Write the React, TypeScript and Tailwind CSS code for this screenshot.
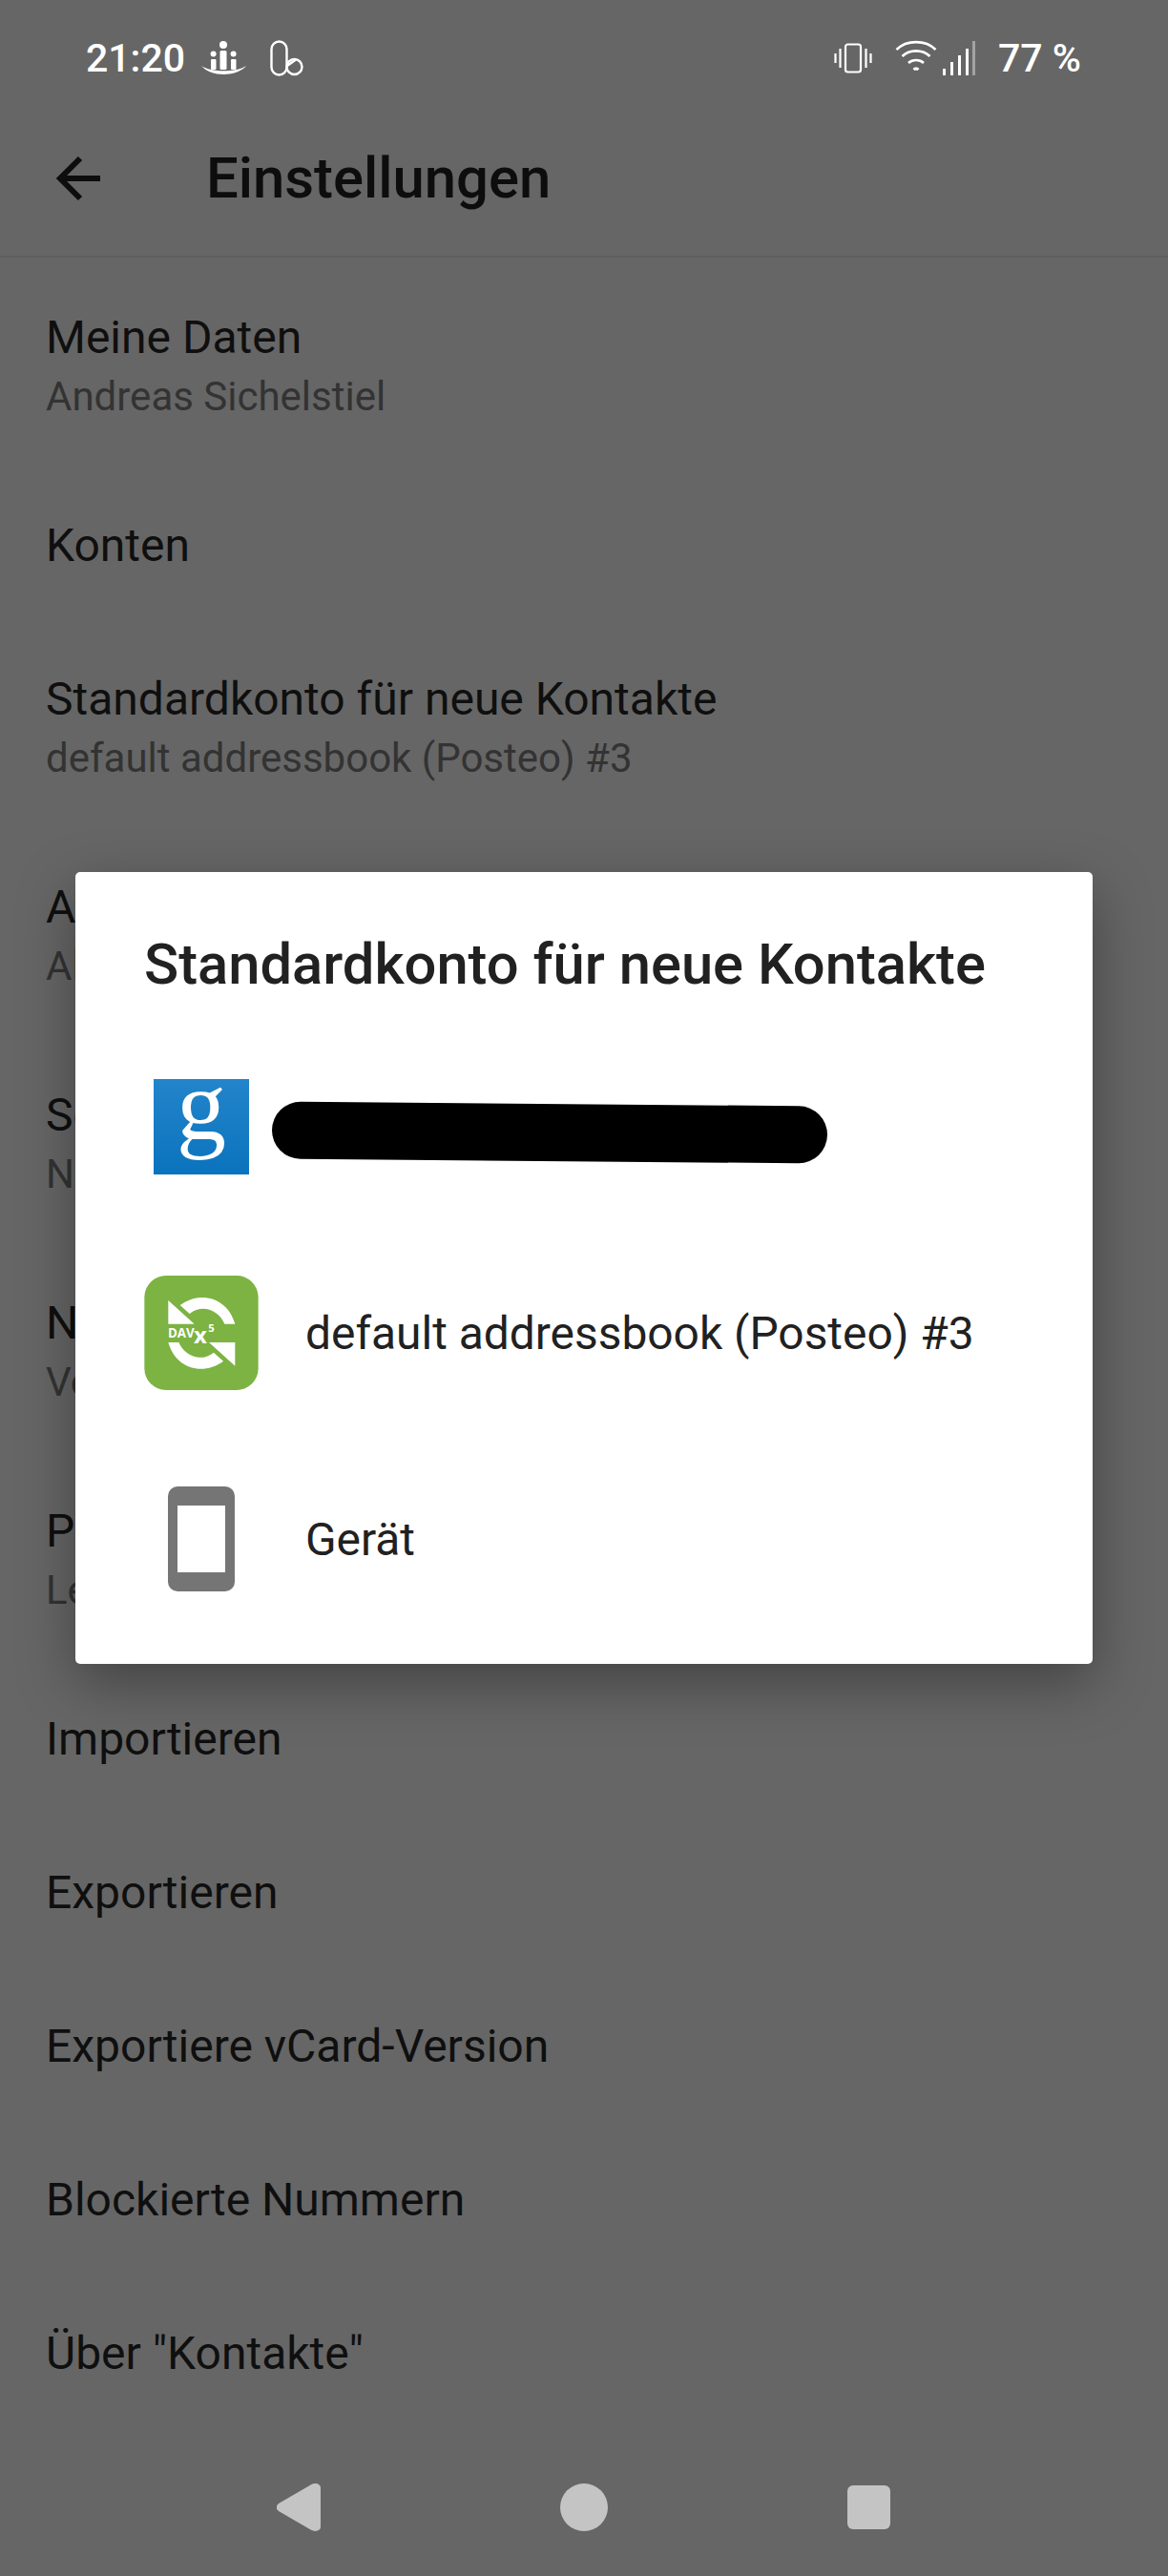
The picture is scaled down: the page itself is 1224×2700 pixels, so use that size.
import React from "react";
import { ArrowLeft } from "lucide-react";

const font = { fontFamily: "Roboto, sans-serif" };

type Row = { title: string; sub?: string };

const rows: Row[] = [
  { title: "Meine Daten", sub: "Andreas Sichelstiel" },
  { title: "Konten" },
  { title: "Standardkonto für neue Kontakte", sub: "default addressbook (Posteo) #3" },
  { title: "Anzeigeoptionen", sub: "Alle Kontakte" },
  { title: "Sortieren nach", sub: "Nachname" },
  { title: "Namensformat", sub: "Vorname zuerst" },
  { title: "Phonetischer Name", sub: "Leere Felder ausblenden" },
  { title: "Importieren" },
  { title: "Exportieren" },
  { title: "Exportiere vCard-Version" },
  { title: "Blockierte Nummern" },
  { title: 'Über "Kontakte"' },
];

const PeopleIcon = () => (
  <svg width="47" height="36" viewBox="0 0 47 36" fill="white">
    <circle cx="23" cy="4" r="4" />
    <rect x="19.5" y="10" width="7" height="20" rx="1.5" />
    <circle cx="12.6" cy="13.6" r="3" />
    <rect x="10" y="19" width="5.5" height="11" rx="1" />
    <circle cx="33.6" cy="13.6" r="3" />
    <rect x="31" y="19" width="5.5" height="11" rx="1" />
    <path d="M0 26 C10 38 37 38 47 26 C37 33 10 33 0 26 Z" />
  </svg>
);

const PillIcon = () => (
  <svg width="35" height="38" viewBox="0 0 35 38" fill="none" stroke="white" strokeWidth="2.4">
    <rect x="1.5" y="1.5" width="16" height="35" rx="8" />
    <circle cx="25.5" cy="28" r="8" />
    <path d="M18 27 L27 20.5" />
  </svg>
);

const VibrateIcon = () => (
  <svg width="40" height="32" viewBox="0 0 40 32" fill="none" stroke="white" strokeWidth="2.2">
    <rect x="12" y="1.5" width="16" height="29" rx="2.5" />
    <path d="M6.5 6 V26 M1.5 11 V21 M33.5 6 V26 M38.5 11 V21" />
  </svg>
);

const WifiIcon = () => (
  <svg width="44" height="33" viewBox="0 0 44 33" fill="none" stroke="white" strokeWidth="2.6">
    <path d="M1.5 10 C12 -0.5 32 -0.5 42.5 10" />
    <path d="M7.5 17 C15 9.5 29 9.5 36.5 17" />
    <path d="M14 24 C18.5 20 25.5 20 30 24" />
    <path d="M19.5 31 C21 29.6 23 29.6 24.5 31" strokeWidth="3" />
  </svg>
);

const SignalIcon = () => (
  <svg width="34" height="36" viewBox="0 0 34 36" fill="white">
    <rect x="0" y="29" width="3" height="7" />
    <rect x="8" y="22" width="3" height="14" />
    <rect x="16" y="15" width="3" height="21" />
    <rect x="24" y="8" width="3" height="28" />
    <rect x="31" y="0" width="3" height="36" fillOpacity="0.4" />
  </svg>
);

const GoogleIcon = () => (
  <svg width="100" height="100" viewBox="0 0 100 100">
    <defs>
      <linearGradient id="googleBlue" x1="0" y1="0" x2="0" y2="1">
        <stop offset="0" stopColor="#2385cb" />
        <stop offset="1" stopColor="#0a73bd" />
      </linearGradient>
    </defs>
    <rect width="100" height="100" fill="url(#googleBlue)" />
    <text x="50" y="63" textAnchor="middle" fontSize="104" fill="white" fontFamily="Liberation Serif, serif">
      g
    </text>
  </svg>
);

const DavIcon = () => (
  <svg width="120" height="120" viewBox="93 110 358 360">
    <rect x="93" y="110" width="358" height="360" rx="68" fill="#7cb342" />
    <g fill="white">
      <path d="M378 262 H345 C330 225 280 195 235 230 L205 203 C270 155 355 180 378 262 Z" />
      <path d="M168 188 L250 262 H168 Z" />
      <path d="M168 320 H201 C216 357 266 387 311 352 L341 379 C276 427 191 402 168 320 Z" />
      <path d="M378 394 L296 320 H378 Z" />
      <g fontFamily="Open Sans, sans-serif" fontWeight="700">
        <text x="167" y="305" fontSize="40">DAV</text>
        <text x="248" y="322" fontSize="72">x</text>
        <text x="294" y="288" fontSize="34">5</text>
      </g>
    </g>
  </svg>
);

const DeviceIcon = () => (
  <div className="w-[70px] h-[110px] rounded-[10px] bg-[#757575] py-[20px] px-[10px]">
    <div className="w-full h-full bg-white" />
  </div>
);

const DialogRow = ({ icon, children }: { icon: React.ReactNode; children?: React.ReactNode }) => (
  <div className="flex items-center h-[216px]">
    <div className="w-[120px] flex items-center justify-center shrink-0">{icon}</div>
    <div className="ml-[49px] pt-[3px] text-[47.9px] text-[#212121] flex-1 whitespace-nowrap">{children}</div>
  </div>
);

export default function App() {
  return (
    <div className="relative w-[1224px] h-[2700px] bg-[#666666] overflow-hidden" style={font}>
      {/* status bar */}
      <div className="h-[122px] flex items-center justify-between pl-[90px] pr-[91px] text-white text-[41px] font-medium">
        <div className="flex items-center">
          <span className="pt-[2px]">21:20</span>
          <span className="ml-[17px] flex"><PeopleIcon /></span>
          <span className="ml-[25px] flex"><PillIcon /></span>
        </div>
        <div className="flex items-center">
          <VibrateIcon />
          <span className="ml-[24px] -mt-[5px] flex"><WifiIcon /></span>
          <span className="ml-[6px] flex"><SignalIcon /></span>
          <span className="ml-[24px] pt-[2px]">77 %</span>
        </div>
      </div>

      {/* toolbar */}
      <div className="h-[148px] flex items-center pb-[14px] pl-[48px] border-b-2 border-[#5f5f5f]">
        <ArrowLeft size={72} strokeWidth={2} strokeLinecap="butt" strokeLinejoin="miter" className="text-[#0d0d0d] -mt-[2px]" />
        <span className="ml-[96px] text-[59.8px] font-medium text-[#0d0d0d]">Einstellungen</span>
      </div>

      {/* settings list */}
      <div className="pl-[48px]">
        {rows.map((r) => (
          <div key={r.title} className={r.sub ? "h-[218px] pt-[53px]" : "h-[161px] pt-[53px]"}>
            <div className="text-[48px] leading-[62px] text-[#0f0f0f]">{r.title}</div>
            {r.sub && <div className="text-[42px] leading-[62px] text-[#333333]">{r.sub}</div>}
          </div>
        ))}
      </div>

      {/* nav bar */}
      <div className="absolute bottom-[47px] left-[290px] flex items-center">
        <svg width="46" height="50" viewBox="0 0 46 50" fill="#c4c4c4">
          <path d="M2 21 L36 1.2 C40 -1 46 0 46 5 V45 C46 50 40 51 36 48.8 L2 29 C-1 27 -1 23 2 21 Z" />
        </svg>
        <div className="ml-[251px] w-[50px] h-[50px] rounded-full bg-[#c4c4c4]" />
        <div className="ml-[251px] w-[45px] h-[46px] rounded-[6px] bg-[#c4c4c4]" />
      </div>

      {/* dialog */}
      <div className="absolute left-[79px] top-[914px] w-[1066px] h-[830px] bg-white rounded-[5px] shadow-[0_20px_60px_rgba(0,0,0,0.35)] pl-[72px]">
        <div className="h-[159px] pt-[62px] text-[59.7px] leading-[70px] font-medium text-[#212121] whitespace-nowrap">
          Standardkonto für neue Kontakte
        </div>
        <DialogRow icon={<GoogleIcon />}>
          <div className="w-[582px] h-[60px] -ml-[35px] mt-[8px] rounded-full bg-black rotate-[0.5deg]" />
        </DialogRow>
        <DialogRow icon={<DavIcon />}>default addressbook (Posteo) #3</DialogRow>
        <DialogRow icon={<DeviceIcon />}>Gerät</DialogRow>
      </div>
    </div>
  );
}
